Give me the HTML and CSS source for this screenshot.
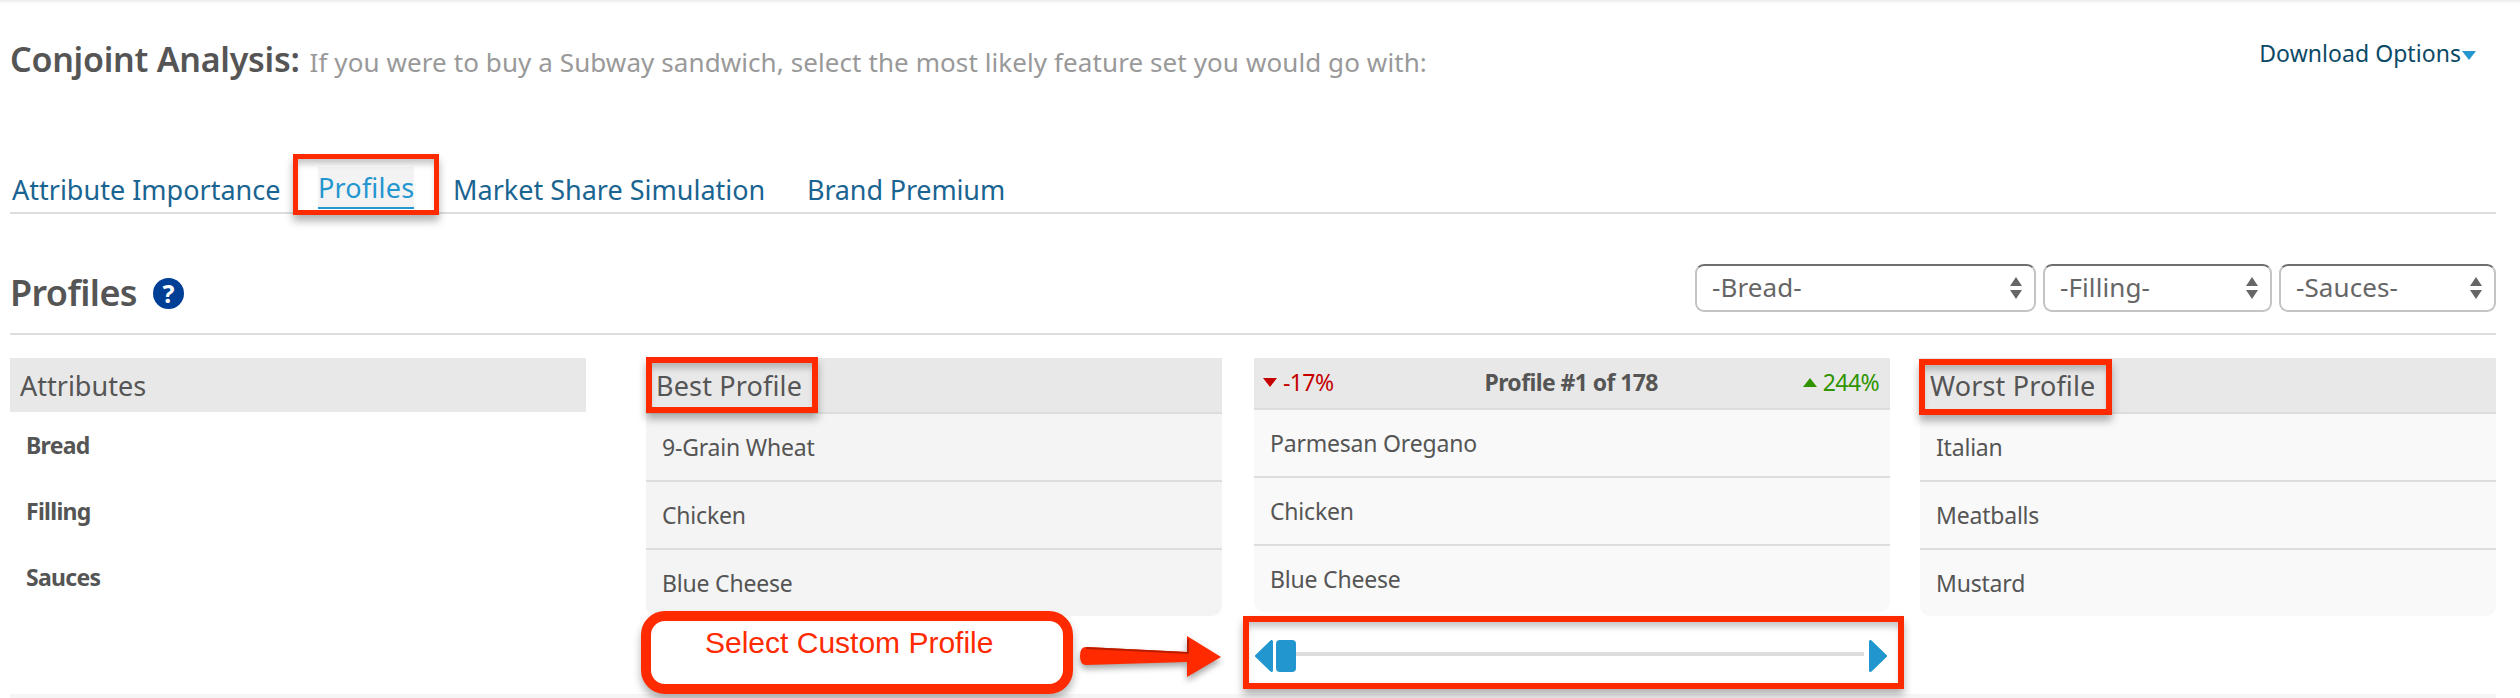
FILE: index.html
```html
<!DOCTYPE html>
<html lang="en">
<head>
<meta charset="utf-8">
<title>Conjoint Analysis</title>
<link rel="stylesheet" href="styles.css">
</head>
<body>
<div class="page">
  <header class="head">
    <h1 class="title"><strong>Conjoint Analysis:</strong> <span>If you were to buy a Subway sandwich, select the most likely feature set you would go with:</span></h1>
    <a class="download">Download Options<i class="caret"></i></a>
  </header>

  <nav class="tabs">
    <a class="tab tab-first">Attribute Importance</a>
    <a class="tab tab-active">Profiles</a>
    <a class="tab tab-market">Market Share Simulation</a>
    <a class="tab tab-brand">Brand Premium</a>
  </nav>

  <section class="section-head">
    <h2 class="section-title">Profiles <span class="help">?</span></h2>
    <div class="filters">
      <div class="select select-bread"><select><option>-Bread-</option></select></div>
      <div class="select select-filling"><select><option>-Filling-</option></select></div>
      <div class="select select-sauces"><select><option>-Sauces-</option></select></div>
    </div>
  </section>

  <section class="grid">
    <div class="col col-attr">
      <div class="attr-head">Attributes</div>
      <div class="attr-row row-a">Bread</div>
      <div class="attr-row">Filling</div>
      <div class="attr-row">Sauces</div>
    </div>
    <div class="col col-best">
      <div class="col-head">Best Profile</div>
      <div class="rows">
        <div class="row">9-Grain Wheat</div>
        <div class="row">Chicken</div>
        <div class="row">Blue Cheese</div>
      </div>
    </div>
    <div class="col col-mid">
      <div class="mid-head">
        <span class="delta down"><i class="tri tri-down"></i>-17%</span>
        <b class="mid-title">Profile #1 of 178</b>
        <span class="delta up"><i class="tri tri-up"></i>244%</span>
      </div>
      <div class="rows rows-mid">
        <div class="row">Parmesan Oregano</div>
        <div class="row">Chicken</div>
        <div class="row">Blue Cheese</div>
      </div>
      <div class="slider">
        <svg class="nudge" width="18" height="32" viewBox="0 0 18 32"><path d="M16.5 1.5 V30.5 L1.5 16 Z"/></svg>
        <div class="thumb"></div>
        <div class="track"></div>
        <svg class="nudge" width="18" height="32" viewBox="0 0 18 32"><path d="M1.5 1.5 V30.5 L16.5 16 Z"/></svg>
      </div>
    </div>
    <div class="col col-worst">
      <div class="col-head">Worst Profile</div>
      <div class="rows rows-worst">
        <div class="row">Italian</div>
        <div class="row">Meatballs</div>
        <div class="row">Mustard</div>
      </div>
    </div>
  </section>
  <div class="foot"></div>

  <div class="mark mark-tab"></div>
  <div class="mark mark-best"></div>
  <div class="mark mark-worst"></div>
  <div class="mark mark-slider"></div>
  <div class="callout">Select Custom Profile</div>
  <svg class="callout-arrow" width="142" height="42" viewBox="0 0 142 42">
    <path class="arrow-fill" d="M6 11 L107 16 V0 L141 21 L107 41 V26 L6 29 Q0 29 0 20 Q0 11 6 11 Z"/>
    <path class="arrow-edge" d="M6 12 L108 17 V3"/>
  </svg>
</div>
</body>
</html>
```
FILE: styles.css
```css
* { box-sizing: border-box; }
html, body { margin: 0; padding: 0; background: #fff; }
body { font-family: "Noto Sans", "Open Sans", sans-serif; color: #555; }

.page {
  position: relative;
  width: 2520px;
  height: 698px;
  overflow: hidden;
  padding: 40px 24px 0 10px;
  background: linear-gradient(#ececec, #fff 4px);
}

.head { display: flex; justify-content: space-between; height: 40px; }
.title { margin: 0; font-size: 26px; line-height: 38px; font-weight: 400; color: #999; white-space: nowrap; letter-spacing: 0.09px; }
.title strong { font-size: 34px; font-weight: 600; color: #555; letter-spacing: -0.25px; margin-right: 3px; }
.download { display: flex; align-items: flex-start; padding: 0 20px 0 0; font-size: 23px; line-height: 26px; color: #0b4a66; letter-spacing: 0.05px; }
.caret { width: 0; height: 0; margin: 11px 0 0 1px; border: 7px solid transparent; border-top: 9px solid #2496d0; border-bottom: 0; }

.tabs { display: flex; height: 134px; margin-top: 0; padding-top: 87px; border-bottom: 2px solid #ddd; }
.tab { display: block; height: 42px; font-size: 27px; line-height: 46px; color: #1a6491; letter-spacing: 0; white-space: nowrap; }
.tab-first { width: 308px; padding-left: 2px; }
.tab-active { width: 96px; background: #f3f3f3; color: #2496d0; text-align: center; border-bottom: 2px solid #2496d0; line-height: 42px; letter-spacing: 0.2px; }
.tab-market { width: 354px; margin-left: 39px; }
.tab-brand { width: 230px; letter-spacing: -0.15px; }

.section-head { display: flex; justify-content: space-between; height: 121px; padding-top: 50px; border-bottom: 2px solid #ddd; }
.section-title { display: flex; align-items: flex-start; margin: 0; padding-top: 6px; font-size: 36px; line-height: 46px; font-weight: 600; color: #555; letter-spacing: -0.6px; }
.help { display: block; width: 31px; height: 31px; margin: 8px 0 0 16px; border-radius: 50%; background: #003f96; color: #fff; font-size: 25px; font-weight: 700; line-height: 31px; text-align: center; letter-spacing: 0; }
.filters { display: flex; gap: 7px; }
.select { position: relative; height: 48px; }
.select::before, .select::after { content: ""; position: absolute; right: 14px; width: 0; height: 0; border: 6px solid transparent; pointer-events: none; }
.select::before { top: 13px; border-bottom: 9px solid #666; border-top: 0; }
.select::after { top: 26px; border-top: 9px solid #666; border-bottom: 0; }
.select select { appearance: none; -webkit-appearance: none; display: block; width: 100%; height: 48px; padding: 0 0 3px 15px; border: 2px solid #c4c4c4; border-top-color: #6e6e6e; border-radius: 9px; background: #fff; font: 400 26px "Noto Sans", sans-serif; color: #666; letter-spacing: 0.1px; }
.select-bread { width: 341px; }
.select-filling { width: 229px; }
.select-sauces { width: 217px; }

.grid { display: flex; padding-top: 23px; height: 359px; }
.col { flex: none; }
.col-attr { width: 576px; }
.col-best { width: 576px; margin-left: 60px; }
.col-mid { width: 636px; margin-left: 32px; }
.col-worst { width: 576px; margin-left: 30px; }

.attr-head { height: 54px; padding-left: 10px; background: #e8e8e8; font-size: 27px; line-height: 56px; letter-spacing: 0; }
.attr-row { height: 66px; padding-left: 16px; font-size: 23px; line-height: 65px; font-weight: 700; letter-spacing: -0.7px; }
.row-a { margin-top: 1px; }

.col-head { height: 56px; padding-left: 10px; background: #e8e8e8; border-bottom: 2px solid #ddd; font-size: 27px; line-height: 56px; letter-spacing: 0.15px; }
.rows { border-radius: 0 0 10px 10px; background: #f4f4f4; overflow: hidden; }
.rows-mid, .rows-worst { background: #f9f9f9; }
.row { height: 68px; padding-left: 16px; border-bottom: 2px solid #ddd; font-size: 23px; line-height: 66px; letter-spacing: -0.2px; color: #555; }
.row:last-child { height: 66px; border-bottom: 0; }

.mid-head { display: flex; justify-content: space-between; align-items: center; height: 52px; padding: 0 11px 2px 9px; background: #e8e8e8; border-bottom: 2px solid #ddd; font-size: 23px; letter-spacing: -0.6px; }
.mid-title { position: relative; left: 3px; font-weight: 700; color: #555; letter-spacing: -0.6px; }
.delta { display: flex; align-items: center; }
.down { color: #c40000; }
.up { color: #2f9400; }
.tri { width: 0; height: 0; margin-right: 6px; border: 7px solid transparent; }
.tri-down { border-top: 9px solid #c40000; border-bottom: 0; }
.tri-up { border-bottom: 9px solid #2f9400; border-top: 0; }

.slider { display: flex; align-items: center; height: 32px; margin-top: 28px; padding-left: 1px; }
.nudge { flex: none; display: block; fill: #2196cf; stroke: #2196cf; stroke-width: 3; stroke-linejoin: round; }
.thumb { flex: none; width: 20px; height: 32px; margin-left: 3px; border-radius: 4px; background: #2196cf; }
.track { flex: none; width: 568px; height: 4px; margin-right: 5px; margin-bottom: 4px; background: #dcdcdc; }

.foot { height: 4px; background: #f5f5f5; }

.mark { position: absolute; border: 6px solid #ff2a00; box-shadow: 0 6px 8px rgba(0,0,0,.3), inset 0 7px 6px -2px rgba(0,0,0,.22); }
.mark-tab { left: 293px; top: 154px; width: 146px; height: 61px; border-width: 5px; }
.mark-best { left: 646px; top: 357px; width: 172px; height: 56px; }
.mark-worst { left: 1919px; top: 359px; width: 193px; height: 56px; }
.mark-slider { left: 1243px; top: 616px; width: 661px; height: 73px; }

.callout { position: absolute; left: 641px; top: 611px; width: 432px; height: 83px; padding: 5px 0 0 54px; border: 10px solid #ff2a00; border-radius: 24px; background: #fff; box-shadow: 0 6px 8px rgba(0,0,0,.3); font: 400 30px "Liberation Sans", Arial, sans-serif; line-height: 34px; color: #ff2a00; }
.callout-arrow { position: absolute; left: 1080px; top: 636px; filter: drop-shadow(0 4px 3px rgba(0,0,0,.35)); }
.arrow-fill { fill: #ff2a00; }
.arrow-edge { fill: none; stroke: #b81d00; stroke-width: 2; }
```
